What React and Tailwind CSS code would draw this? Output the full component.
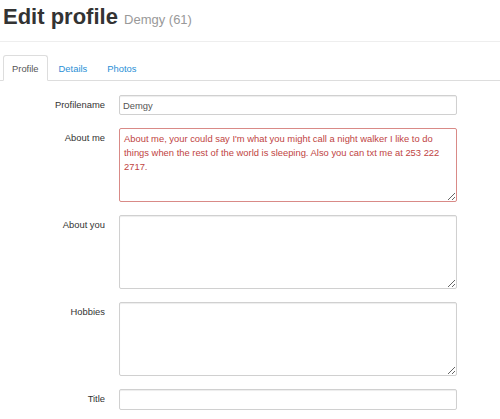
import React from "react";

const font = { fontFamily: '"Liberation Sans", Arial, sans-serif' };

const inputCls =
  "block w-[338px] border border-[#d0d0d0] rounded-[2px] bg-white px-[3px] text-[9.4px] text-[#555] outline-none shadow-[inset_0_1px_1px_rgba(0,0,0,0.075)]";

const Row = ({ label, children }) => (
  <div className="flex mb-[13px]">
    <label className="w-[105px] shrink-0 text-right leading-[20px] text-[9.4px] text-[#333]">
      {label}
    </label>
    <div className="ml-[14px]">{children}</div>
  </div>
);

const App = () => {
  const tabs = ["Profile", "Details", "Photos"];

  return (
    <div className="w-[500px] h-[419px] bg-white overflow-hidden" style={font}>
      <div className="px-[3px] pt-[2px] h-[42px] border-b border-[#eeeeee]">
        <h1 className="text-[22px] font-bold text-[#333] leading-[30px]">
          Edit profile{" "}
          <small className="text-[13px] font-normal text-[#999]">Demgy (61)</small>
        </h1>
      </div>

      <ul className="flex mt-[13px] px-[3px] border-b border-[#dddddd]">
        {tabs.map((t, i) => (
          <li key={t} className="mr-[2px] -mb-px">
            <a
              className={
                i === 0
                  ? "block px-[8px] h-[26px] leading-[26px] text-[9.4px] text-[#555] bg-white border border-[#dddddd] border-b-white rounded-t-[3px]"
                  : "block px-[8px] h-[26px] leading-[26px] text-[9.4px] text-[#2a8fd6] border border-transparent"
              }
            >
              {t}
            </a>
          </li>
        ))}
      </ul>

      <form className="pt-[14px]">
        <Row label="Profilename">
          <input className={inputCls + " h-[20px]"} defaultValue="Demgy" />
        </Row>
        <Row label="About me">
          <textarea
            className="block w-[338px] h-[74px] border border-[#d98a87] rounded-[2px] bg-white px-[4px] pt-[3px] text-[9.4px] leading-[14px] text-[#c0443f] outline-none"
            defaultValue="About me, your could say I'm what you might call a night walker I like to do things when the rest of the world is sleeping. Also you can txt me at 253 222 2717."
          />
        </Row>
        <Row label="About you">
          <textarea className={inputCls + " h-[74px]"} />
        </Row>
        <Row label="Hobbies">
          <textarea className={inputCls + " h-[74px]"} />
        </Row>
        <Row label="Title">
          <input className={inputCls + " h-[21px]"} />
        </Row>
      </form>
    </div>
  );
};

export default App;
